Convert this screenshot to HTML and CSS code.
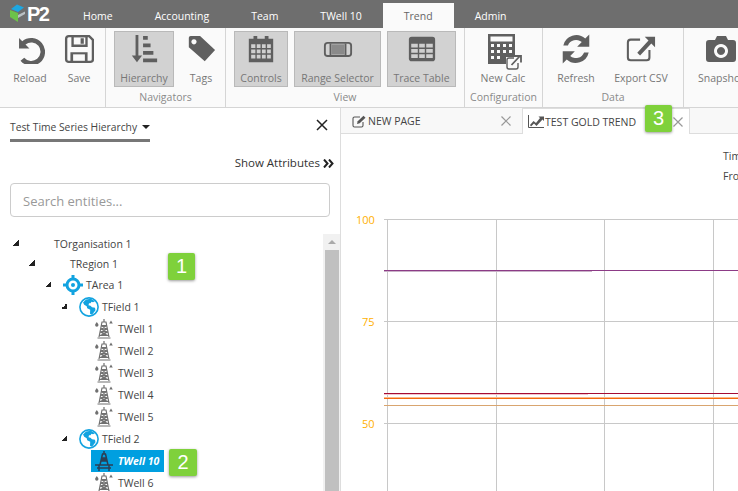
FILE: index.html
```html
<!DOCTYPE html>
<html lang="en">
<head>
<meta charset="utf-8">
<title>P2 Trend</title>
<link rel="stylesheet" href="styles.css">
</head>
<body>
<svg class="defs" width="0" height="0">
  <symbol id="well" viewBox="0 0 18 20">
    <path d="M9 0v3M6.500 3h5M7 3 4 18M11 3l3 15M6.400 6.500h5.200M5.800 10h6.400M5.200 13h7.600M4.500 16.500h9M6.400 6.500l5.200 3.500M11.600 6.500l-5.200 3.500M5.800 10l6.400 3M12.200 10l-6.400 3M5.200 13l7.600 3.500M12.800 13l-7.600 3.500M2.500 19h13" fill="none" stroke="#707070" stroke-width="1.200"/>
    <path d="M1.800 3c1 1.400 1.700 2.200 1.700 3.100a1.700 1.700 0 0 1-3.400 0C.1 5.200.8 4.400 1.800 3zM16 1.500l1.800 3h-3.600z" fill="#707070"/>
  </symbol>
  <symbol id="globe" viewBox="0 0 20 20">
    <circle cx="10" cy="10" r="9.100" fill="#fff" stroke="#12a3e0" stroke-width="1.600"/>
    <path d="M4 5.500 7 2.500l5-.8 4 2.500-2 1-1.500-.5-1 1.500-1.500 0-.5 2 2 .5 1.500 1.500 3 .5.500 2.500-3.500 4.500-2-1 .2-4-3-1.500-.5-2-2.500-1.500z" fill="#12a3e0"/>
  </symbol>
</svg>

<header class="nav">
  <div class="logo">
    <svg width="18" height="20" viewBox="0 0 18 20"><path d="M8 .5 15 3.500 9 8 2 5z" fill="#1ea7e1"/><path d="M9 11l7-3.500V10l-7 4z" fill="#b9c0c4"/><path d="M9 9v9L1 13V6z" fill="#6cc24a"/></svg>
    <span class="logo-text">P2</span>
  </div>
  <a class="nav-tab nav-home">Home</a>
  <a class="nav-tab">Accounting</a>
  <a class="nav-tab">Team</a>
  <a class="nav-tab">TWell 10</a>
  <a class="nav-tab nav-active">Trend</a>
  <a class="nav-tab">Admin</a>
</header>

<section class="ribbon">
  <div class="group g1">
    <div class="buttons">
      <div class="btn w-reload">
        <svg class="ico" viewBox="3 3 26 26"><path d="M6.500 6.500v9h9l-3.400-3.400a8 8 0 1 1-1.100 11.400l-3.200 2.600A12 12 0 1 0 9.300 9.300z" fill="#5f5f5f"/></svg>
        <span>Reload</span>
      </div>
      <div class="btn w-save">
        <svg class="ico" viewBox="2 2 28 28"><path d="M4 6.500Q4 4 6.500 4h19L29 7.500v18q0 2.500-2.500 2.500h-20Q4 28 4 25.500z" fill="none" stroke="#5f5f5f" stroke-width="2.200"/><path d="M10 4h13v9H10z" fill="none" stroke="#5f5f5f" stroke-width="2.200"/><path d="M17.500 6h3v5h-3zM8 19h16v9H8z" fill="#5f5f5f"/><path d="M10.500 21h11v6h-11z" fill="#fafafa"/></svg>
        <span>Save</span>
      </div>
    </div>
    <div class="group-label"></div>
  </div>
  <div class="group g2">
    <div class="buttons">
      <div class="btn on w-hier">
        <svg class="ico" viewBox="0 0 32 32"><path d="M7 1h3v22h4l-5.500 7L3 23h4z" fill="#5f5f5f"/><path d="M15 2h5v4h-5zM15 10h8v4h-8zM15 18h11v4h-11zM15 26h15v4H15z" fill="#5f5f5f"/></svg>
        <span>Hierarchy</span>
      </div>
      <div class="btn w-tags">
        <svg class="ico" viewBox="0 0 32 32"><path d="M3 4q0-2 2-2h10l16 15-11 12L3 14zM8.500 5.500a2.800 2.800 0 1 0 .01 0z" fill="#5f5f5f" fill-rule="evenodd"/></svg>
        <span>Tags</span>
      </div>
    </div>
    <div class="group-label">Navigators</div>
  </div>
  <div class="group g3">
    <div class="buttons">
      <div class="btn on w-ctrl">
        <svg class="ico" viewBox="0 0 32 32"><path d="M3 5h5V2h4v3h8V2h4v3h5v25H3z" fill="#5f5f5f"/><path d="M5.500 11h4.500v4H5.500zM11.500 11h4v4h-4zM17 11h4v4h-4zM22.500 11h4v4h-4zM5.500 16.500h4.500v4H5.500zM11.500 16.500h4v4h-4zM17 16.500h4v4h-4zM22.500 16.500h4v4h-4zM5.500 22h4.500v4H5.500zM11.500 22h4v4h-4zM17 22h4v4h-4zM22.500 22h4v4h-4z" fill="#cfcfcf"/></svg>
        <span>Controls</span>
      </div>
      <div class="btn on w-range">
        <svg class="ico" viewBox="0 0 32 32"><rect x="2" y="9.500" width="28" height="14" rx="3" fill="none" stroke="#5f5f5f" stroke-width="2"/><path d="M8 10v13M24 10v13" stroke="#5f5f5f" stroke-width="2"/><path d="M9 11h14v11H9z" fill="#8a8a8a"/></svg>
        <span>Range Selector</span>
      </div>
      <div class="btn on w-trace">
        <svg class="ico" viewBox="0 0 32 32"><path d="M5 3h22q3 0 3 3v20q0 3-3 3H5q-3 0-3-3V6q0-3 3-3z" fill="#5f5f5f"/><path d="M4.500 10.500h7v4h-7zM13 10.500h6v4h-6zM20.500 10.500h7v4h-7zM4.500 16h7v4h-7zM13 16h6v4h-6zM20.500 16h7v4h-7zM4.500 21.500h7v4h-7zM13 21.500h6v4h-6zM20.500 21.500h7v4h-7z" fill="#cfcfcf"/></svg>
        <span>Trace Table</span>
      </div>
    </div>
    <div class="group-label">View</div>
  </div>
  <div class="group g4">
    <div class="buttons">
      <div class="btn w-calc">
        <svg class="ico calc" viewBox="0 0 34 36"><path d="M0 0h27v23h-9v7H0z" fill="#5f5f5f"/><path d="M2.500 2.500h22v5h-22z" fill="#fafafa"/><path d="M3 10h3v3H3zM9 10h3v3H9zM15 10h3v3h-3zM21 10h3v3h-3zM3 16h3v3H3zM9 16h3v3H9zM15 16h3v3h-3zM21 16h3v3h-3zM3 22h3v3H3zM9 22h3v3H9z" fill="#fafafa"/><path d="M26 24h-5q-2 0-2 2v7q0 2 2 2h7q2 0 2-2v-4" fill="none" stroke="#5f5f5f" stroke-width="1.400"/><path d="M23.500 31l8-8.500M26.500 22H33v6.500" fill="none" stroke="#5f5f5f" stroke-width="1.800"/></svg>
        <span>New Calc</span>
      </div>
    </div>
    <div class="group-label">Configuration</div>
  </div>
  <div class="group g5">
    <div class="buttons">
      <div class="btn w-refresh">
        <svg class="ico" viewBox="3 3 26 26"><path d="M5 13A11.500 11.500 0 0 1 24 7l3.500-3.500V14H17l4-4a7.500 7.500 0 0 0-12 3zM27 19A11.500 11.500 0 0 1 8 25l-3.500 3.500V18H15l-4 4a7.500 7.500 0 0 0 12-3z" fill="#5f5f5f"/></svg>
        <span>Refresh</span>
      </div>
      <div class="btn w-export">
        <svg class="ico" viewBox="1 1 32 32"><path d="M16 7H6q-3 0-3 3v16q0 3 3 3h17q3 0 3-3v-8" fill="none" stroke="#5f5f5f" stroke-width="2.200"/><path d="M13 21 25 8l-4-4h11v11l-4-4-12 13z" fill="#5f5f5f"/></svg>
        <span>Export CSV</span>
      </div>
    </div>
    <div class="group-label">Data</div>
  </div>
  <div class="group g6">
    <div class="buttons">
      <div class="btn w-snap">
        <svg class="ico snap" viewBox="0 1 32 30"><path d="M4 7h6l2-4h9l2 4h5q3 0 3 3v16q0 3-3 3H4q-3 0-3-3V10q0-3 3-3zM16 11a7 7 0 1 0 .01 0zM16 14a4 4 0 1 1-.01 0z" fill="#5f5f5f" fill-rule="evenodd"/></svg>
        <span>Snapshot</span>
      </div>
    </div>
  </div>
</section>

<main class="body">
  <aside class="side">
    <div class="side-head">
      <div class="selector">Test Time Series Hierarchy<i class="caret"></i></div>
      <svg class="close" width="12" height="12" viewBox="0 0 12 12"><path d="M1 1l10 10M11 1 1 11" stroke="#222" stroke-width="1.500"/></svg>
    </div>
    <div class="attrs">Show Attributes <svg width="11" height="9" viewBox="0 0 11 9"><path d="M1 .5 4.500 4.500 1 8.500M6 .5l3.500 4-3.500 4" fill="none" stroke="#222" stroke-width="2"/></svg></div>
    <div class="search">Search entities...</div>
    <div class="tree-wrap">
      <ul class="tree">
        <li class="row short d0"><i class="tog"></i><span class="slot"></span>TOrganisation 1</li>
        <li class="row short d1"><i class="tog"></i><span class="slot"></span>TRegion 1</li>
        <li class="row d2"><i class="tog"></i><span class="slot"><svg width="20" height="20" viewBox="0 0 20 20"><circle cx="10" cy="10" r="6" fill="none" stroke="#12a3e0" stroke-width="3"/><circle cx="10" cy="10" r="2" fill="#12a3e0"/><path d="M10 0v5M10 15v5M0 10h5M15 10h5" stroke="#12a3e0" stroke-width="3"/></svg></span>TArea 1</li>
        <li class="row d3"><i class="tog"></i><span class="slot"><svg width="20" height="20"><use href="#globe"/></svg></span>TField 1</li>
        <li class="row d4"><i class="tog none"></i><span class="slot"><svg width="18" height="20"><use href="#well"/></svg></span>TWell 1</li>
        <li class="row d4"><i class="tog none"></i><span class="slot"><svg width="18" height="20"><use href="#well"/></svg></span>TWell 2</li>
        <li class="row d4"><i class="tog none"></i><span class="slot"><svg width="18" height="20"><use href="#well"/></svg></span>TWell 3</li>
        <li class="row d4"><i class="tog none"></i><span class="slot"><svg width="18" height="20"><use href="#well"/></svg></span>TWell 4</li>
        <li class="row d4"><i class="tog none"></i><span class="slot"><svg width="18" height="20"><use href="#well"/></svg></span>TWell 5</li>
        <li class="row d3"><i class="tog"></i><span class="slot"><svg width="20" height="20"><use href="#globe"/></svg></span>TField 2</li>
        <li class="row d4"><i class="tog none"></i><span class="slot sel-bg"><svg width="18" height="20" viewBox="0 0 18 20"><path d="M9 0v3M7 3h4M7.500 3 5 14M10.500 3 13 14M6.500 7h5M6 10h6M6.500 7l5 3M11.500 7l-5 3M0 14h18M4 14v6M14 14v6M2 17h14" fill="none" stroke="#2b3f55" stroke-width="1.500"/></svg></span><span class="sel-text">TWell 10</span></li>
        <li class="row d4"><i class="tog none"></i><span class="slot"><svg width="18" height="20"><use href="#well"/></svg></span>TWell 6</li>
      </ul>
      <div class="scrollbar"><i class="arrow"></i><div class="thumb"></div></div>
    </div>
    <div class="badge b1">1</div>
    <div class="badge b2">2</div>
  </aside>

  <section class="content">
    <div class="tabs">
      <div class="page-tab t1">
        <svg width="15" height="13" viewBox="0 0 15 13"><path d="M8 2H2.500Q1 2 1 3.500v7Q1 12 2.500 12h7q1.500 0 1.500-1.500V7" fill="none" stroke="#555" stroke-width="1.100"/><path d="M5 9l.7-2.700L11.500 .7l2 2-5.800 5.600z" fill="#555"/></svg>
        <span class="tab-label">NEW PAGE</span>
        <svg class="tab-x" width="10" height="10" viewBox="0 0 10 10"><path d="M.5.5l9 9M9.500.5l-9 9" stroke="#999" stroke-width="1.200"/></svg>
      </div>
      <div class="page-tab t2">
        <svg width="16" height="13" viewBox="0 0 16 13"><path d="M.5 0v12.500H16" fill="none" stroke="#555"/><path d="M2 10l3.500-4 2.500 2 4-5-1.500-1.500H16V6l-1.500-1.500-6 6.500-2.500-2.500-3 3z" fill="#555"/></svg>
        <span class="tab-label">TEST GOLD TREND</span>
        <svg class="tab-x" width="10" height="10" viewBox="0 0 10 10"><path d="M.5.5l9 9M9.500.5l-9 9" stroke="#999" stroke-width="1.200"/></svg>
      </div>
      <div class="badge b3">3</div>
    </div>
    <svg class="chart" width="397" height="357" viewBox="341 134 397 357">
      <text class="meta" x="723" y="160">Time</text>
      <text class="meta" x="723" y="180">From</text>
      <g class="grid">
        <path d="M384 219.500H738M384 321.500H738M384 423.500H738"/>
        <path d="M387.500 219V491M496.500 219V491M604.500 219V491M713.500 219V491"/>
      </g>
      <text class="axis" x="356" y="224">100</text>
      <text class="axis" x="362" y="326">75</text>
      <text class="axis" x="362" y="428">50</text>
      <path d="M384 271.500H592" stroke="#c9b2c8" stroke-width="1"/>
      <path d="M384 270.500H738" stroke="#8c3b86" stroke-width="1"/>
      <path d="M384 394.500H588" stroke="#f3c3cb" stroke-width="1"/>
      <path d="M384 393.500H738" stroke="#a50b35" stroke-width="1"/>
      <path d="M384 398.500H738" stroke="#f36a10" stroke-width="1"/>
      <path d="M384 397.500H738" stroke="#fbb98a" stroke-width="1"/>
      <path d="M384 405.500H738" stroke="#d9a56f" stroke-width="1"/>
    </svg>
  </section>
</main>
</body>
</html>
```

FILE: styles.css
```css
* { box-sizing: border-box; }
html, body { margin: 0; padding: 0; }
body {
  width: 738px;
  height: 491px;
  overflow: hidden;
  background: #fff;
  color: #444;
  font-family: "Open Sans", "Liberation Sans", sans-serif;
  font-size: 11px;
}
.defs { position: absolute; }

/* top navigation */
.nav {
  display: flex;
  height: 28px;
  align-items: flex-end;
  background: #6e6e6e;
}
.logo {
  display: flex;
  flex: none;
  width: 62px;
  height: 28px;
  align-items: center;
  padding-left: 9px;
}
.logo-text {
  color: #fff;
  font: bold 20px/1 "Liberation Sans", sans-serif;
  letter-spacing: -1.500px;
}
.nav-tab {
  display: flex;
  height: 25px;
  padding: 0 21px;
  align-items: center;
  color: #fff;
  font-size: 10.500px;
}
.nav-active {
  background: #fafafa;
  color: #666;
}

/* ribbon */
.ribbon {
  display: flex;
  height: 80px;
  overflow: hidden;
  border-bottom: 1px solid #d5d5d5;
  background: #fafafa;
}
.group {
  display: flex;
  flex: none;
  flex-direction: column;
  border-right: 1px solid #d5d5d5;
}
.g1 { width: 106px; }
.g2 { width: 120px; }
.g3 { width: 239px; }
.g4 { width: 78px; }
.g5 { width: 141px; }
.g6 { width: 60px; border-right: 0; }
.buttons {
  display: flex;
  height: 62px;
  padding: 3px 0 0 8px;
  gap: 6px;
}
.group-label {
  color: #8a8a8a;
  font-size: 10.500px;
  line-height: 14px;
  text-align: center;
}
.btn {
  display: flex;
  flex: none;
  flex-direction: column;
  height: 56px;
  align-items: center;
  padding-top: 2px;
  border: 1px solid transparent;
  color: #777;
  font-size: 10.500px;
  white-space: nowrap;
}
.btn span { margin-top: 7px; line-height: 14px; }
.btn.on { border-color: #b9b9b9; background: #d2d2d2; color: #777; }
.ico { width: 30px; height: 30px; flex: none; }
.ico.calc { width: 34px; height: 36px; margin-bottom: -6px; margin-left: 3px; }
.ico.snap { width: 34px; height: 30px; }
.w-reload { width: 44px; }
.w-save { width: 42px; }
.w-hier { width: 60px; }
.w-tags { width: 42px; }
.w-ctrl { width: 54px; }
.w-range { width: 87px; }
.w-trace { width: 69px; }
.w-calc { width: 60px; }
.w-refresh { width: 50px; }
.w-export { width: 68px; }
.w-snap { width: 56px; margin-left: 1px; }

/* main */
.body { display: flex; height: 383px; }
.side {
  position: relative;
  display: flex;
  flex: none;
  flex-direction: column;
  width: 341px;
  border-right: 1px solid #ddd;
}
.side-head {
  display: flex;
  height: 34px;
  align-items: flex-start;
  justify-content: space-between;
  padding: 11px 12px 0 10px;
}
.selector {
  display: flex;
  width: 140px;
  height: 23px;
  align-items: flex-start;
  border-bottom: 3px solid #777;
  color: #444;
  font-size: 10.300px;
  line-height: 16px;
  white-space: nowrap;
}
.caret {
  margin: 6px 0 0 5px;
  border-top: 4px solid #222;
  border-right: 4px solid transparent;
  border-left: 4px solid transparent;
}
.attrs {
  display: flex;
  height: 41px;
  justify-content: flex-end;
  align-items: flex-start;
  gap: 3px;
  padding: 13px 6px 0 0;
  color: #333;
  font-size: 11.500px;
  line-height: 16px;
}
.attrs svg { margin-top: 4px; }
.search {
  display: flex;
  width: 320px;
  height: 34px;
  flex: none;
  align-items: center;
  margin-left: 10px;
  padding: 1px 0 0 12px;
  border: 1px solid #ccc;
  border-radius: 4px;
  color: #999;
  font-size: 13px;
}
.tree-wrap {
  display: flex;
  flex: 1;
  min-height: 0;
  margin-top: 17px;
  overflow: hidden;
}
.tree {
  flex: 1;
  margin: 0;
  padding: 0;
  list-style: none;
}
.row {
  display: flex;
  height: 22px;
  align-items: center;
  color: #444;
  font-size: 10.500px;
  white-space: nowrap;
}
.row.short { height: 20px; }
.d0 { padding-left: 13px; }
.d1 { padding-left: 29px; }
.d2 { padding-left: 45px; }
.d3 { padding-left: 61px; }
.d4 { padding-left: 77px; }
.tog {
  flex: none;
  width: 18px;
  height: 6px;
  margin-top: -3px;
  background: linear-gradient(135deg, transparent 50%, #222 50%) 0 0 / 6px 6px no-repeat;
}
.tog.none { background: none; }
.slot { display: flex; flex: none; width: 23px; height: 22px; align-items: center; }
.sel-bg { width: 27px; margin-left: -4px; padding-left: 4px; background: #009fe0; }
.sel-text {
  display: flex;
  height: 22px;
  width: 46px;
  align-items: center;
  background: #009fe0;
  color: #fff;
  font-style: italic;
  font-weight: 700;
}
.scrollbar {
  position: relative;
  flex: none;
  width: 18px;
  margin-right: -1px;
  padding: 16px 2px 0;
  background: #f1f1f1;
}
.arrow {
  position: absolute;
  top: 6px;
  left: 5px;
  border-right: 4px solid transparent;
  border-bottom: 4px solid #aaa;
  border-left: 4px solid transparent;
}
.thumb { height: 100%; background: #c0c0c0; }

/* badges */
.badge {
  position: absolute;
  display: flex;
  width: 27px;
  height: 27px;
  align-items: center;
  justify-content: center;
  border-radius: 2px;
  background: #7fd13b;
  box-shadow: 0 1px 3px rgba(0, 0, 0, .4);
  color: #fff;
  font-family: "Liberation Sans", sans-serif;
  font-size: 20px;
}
.b1 { top: 145px; left: 168px; }
.b2 { top: 341px; left: 169px; width: 28px; }
.b3 { top: -3px; left: 304px; }

/* content */
.content { position: relative; flex: 1; min-width: 0; }
.tabs {
  position: relative;
  display: flex;
  height: 26px;
  border-bottom: 1px solid #ddd;
  background: #f8f8f8;
}
.page-tab {
  display: flex;
  height: 26px;
  align-items: center;
  padding-left: 11px;
  color: #444;
  font-size: 10.500px;
  white-space: nowrap;
}
.t1 { width: 181px; }
.t2 {
  width: 168px;
  padding-left: 5px;
  border: 1px solid #ddd;
  border-bottom: 0;
  background: #fff;
}
.tab-label { margin-left: 1px; }
.tab-x { margin-left: auto; margin-right: 11px; }
.t2 .tab-x { margin-right: 6px; }
.chart { display: block; }
.chart .grid path { fill: none; stroke: #c8c8c8; stroke-width: 1; }
.meta { fill: #444; font-size: 10.500px; }
.axis { fill: #ffb000; font-size: 11px; }
```
